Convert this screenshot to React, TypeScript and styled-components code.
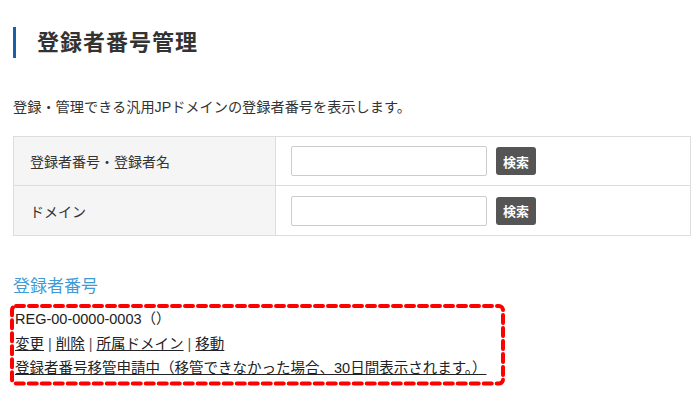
import * as React from "react";
import styled, { createGlobalStyle } from "styled-components";

const GlobalStyle = createGlobalStyle`
  body {
    margin: 0;
    background: #ffffff;
    font-family: "Liberation Sans", "Noto Sans CJK JP", sans-serif;
    color: #333333;
  }
`;

const Page = styled.div`
  padding: 0 9px 0 13px;
`;

const Title = styled.h1`
  margin: 27px 0 0 0;
  padding-left: 21px;
  border-left: 3px solid #1c5fa9;
  font-size: 22px;
  line-height: 31px;
  font-weight: bold;
  letter-spacing: 1px;
  color: #333333;
`;

const Lead = styled.p`
  margin: 39px 0 0 0;
  font-size: 14.2px;
  line-height: 20px;
  color: #333333;
`;

const SearchTable = styled.div`
  margin-top: 19px;
  border: 1px solid #dddddd;
  display: grid;
  grid-template-columns: 262px 1fr;
`;

const LabelCell = styled.div<{ $last?: boolean }>`
  background: #f5f5f5;
  border-right: 1px solid #dddddd;
  border-bottom: ${(p) => (p.$last ? "none" : "1px solid #dddddd")};
  display: flex;
  align-items: center;
  padding-left: 16px;
  font-size: 14px;
  height: ${(p) => (p.$last ? "49px" : "48px")};
`;

const FieldCell = styled.div<{ $last?: boolean }>`
  border-bottom: ${(p) => (p.$last ? "none" : "1px solid #dddddd")};
  display: flex;
  align-items: center;
  gap: 9px;
  padding-left: 15px;
`;

const TextInput = styled.input`
  width: 196px;
  height: 30px;
  box-sizing: border-box;
  border: 1px solid #cccccc;
  border-radius: 2px;
  background: #ffffff;
  padding: 0 6px;
  font-size: 14px;
`;

const SearchButton = styled.button`
  width: 40px;
  height: 28px;
  border: none;
  border-radius: 3px;
  background: #555555;
  color: #ffffff;
  font-family: "Liberation Sans", "Noto Sans CJK JP", sans-serif;
  font-size: 13px;
  font-weight: bold;
  padding: 0;
  cursor: pointer;
`;

const SectionHeading = styled.h2`
  margin: 39px 0 0 0;
  font-size: 17px;
  line-height: 24px;
  font-weight: normal;
  color: #3f9bd6;
`;

const Marked = styled.div`
  position: relative;
  margin: 5px 0 0 -3px;
  width: 495px;
  box-sizing: border-box;
  padding: 3px 5px 5px 5px;
`;

const Frame = styled.svg`
  position: absolute;
  top: 2px;
  left: 2px;
  width: calc(100% - 4px);
  height: calc(100% - 4px);
  overflow: visible;
  pointer-events: none;
`;

const Line = styled.div`
  font-size: 14.5px;
  line-height: 24.5px;
  color: #222222;
  white-space: nowrap;
`;

const ActionLink = styled.a`
  color: #222222;
  text-decoration: underline;
  cursor: pointer;
`;

const Sep = styled.span`
  color: #555555;
  margin: 0 4px;
`;

const rows = [
  { label: "登録者番号・登録者名" },
  { label: "ドメイン" },
];

const actions = ["変更", "削除", "所属ドメイン", "移動"];

const App = () => {
  return (
    <Page>
      <GlobalStyle />
      <Title>登録者番号管理</Title>
      <Lead>登録・管理できる汎用JPドメインの登録者番号を表示します。</Lead>
      <SearchTable>
        {rows.map((r, i) => (
          <React.Fragment key={r.label}>
            <LabelCell $last={i === rows.length - 1}>{r.label}</LabelCell>
            <FieldCell $last={i === rows.length - 1}>
              <TextInput type="text" />
              <SearchButton>検索</SearchButton>
            </FieldCell>
          </React.Fragment>
        ))}
      </SearchTable>
      <SectionHeading>登録者番号</SectionHeading>
      <Marked>
        <Frame>
          <rect
            x="0"
            y="0"
            width="100%"
            height="100%"
            rx="4"
            fill="none"
            stroke="#ff0000"
            strokeWidth="4"
            strokeDasharray="8 5"
            strokeLinecap="round"
          />
        </Frame>
        <Line>REG-00-0000-0003（）</Line>
        <Line>
          {actions.map((a, i) => (
            <React.Fragment key={a}>
              {i > 0 && <Sep>|</Sep>}
              <ActionLink>{a}</ActionLink>
            </React.Fragment>
          ))}
        </Line>
        <Line>
          <ActionLink>登録者番号移管申請中（移管できなかった場合、30日間表示されます。）</ActionLink>
        </Line>
      </Marked>
    </Page>
  );
};

export default App;
